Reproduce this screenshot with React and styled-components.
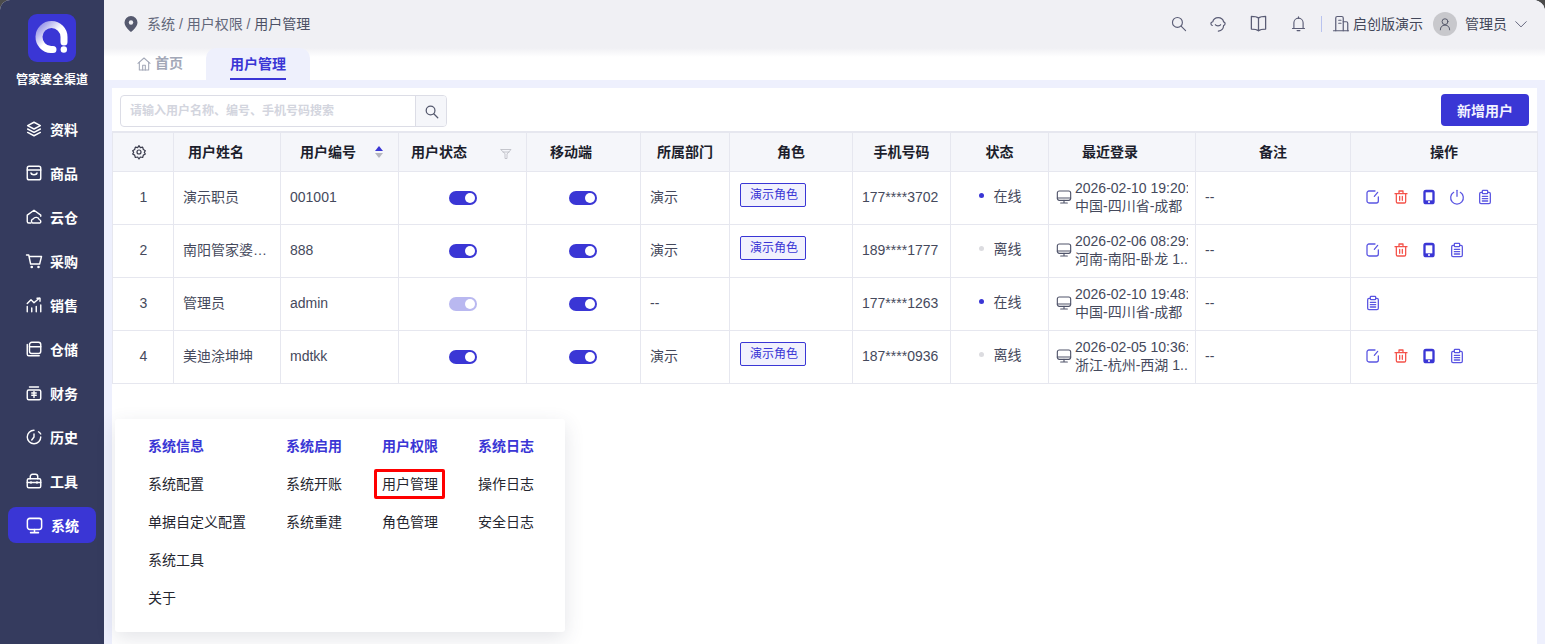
import React from "react";
import styled, { createGlobalStyle } from "styled-components";

const Blue = "#3a36d5";
const Global = createGlobalStyle`
  html, body { margin: 0; padding: 0; height: 100%; background: #4b4b4b; overflow: hidden; }
  #root { height: 644px; }
  * { box-sizing: border-box; }
  body { font-family: "Liberation Sans", "Noto Sans CJK SC", sans-serif; font-size: 14px; }
`;
const Shell = styled.div`
  width: 1545px; height: 644px; display: flex; position: relative; overflow: hidden;
  border-radius: 10px 12px 0 0; background: #eef0fd;
`;
const Side = styled.aside`
  width: 104px; flex: none; background: #353b5e; display: flex; flex-direction: column; align-items: center; padding-top: 14px;
`;
const Logo = styled.div`width: 48px; height: 48px; border-radius: 9px; background: ${Blue}; display: flex; align-items: center; justify-content: center;`;
const Brand = styled.div`margin: 10px 0 23px; color: #fff; font-size: 12px; font-weight: 700; line-height: 16px; white-space: nowrap;`;
const NavList = styled.nav`display: flex; flex-direction: column; width: 88px; gap: 8px;`;
const NavItem = styled.a`
  height: 36px; border-radius: 8px; display: flex; align-items: center; gap: 7px; padding-left: 17px;
  background: ${p => p.$active ? Blue : "transparent"}; color: #fff; font-weight: 700; font-size: 14px;
`;
const Main = styled.main`flex: 1; min-width: 0; display: flex; flex-direction: column; background: #eef0fd;`;
const Top = styled.header`height: 48px; flex: none; background: #f0f0f4; display: flex; align-items: center; padding: 0 17px 1px 20px;`;
const Crumb = styled.div`display: flex; align-items: center; gap: 9px; color: #62677a; font-size: 14px; flex: 1;`;
const CrumbText = styled.span`margin-top: -2px;`;
const CrumbLast = styled.span`color: #4c5064;`;
const TopTools = styled.div`display: flex; align-items: center; color: #5a5c75;`;
const ToolBtn = styled.span`width: 40px; display: flex; justify-content: center;`;
const Divider = styled.span`width: 1px; height: 16px; background: #b9c3ef; margin: 0 10px 0 3px;`;
const Org = styled.span`color: #43475a; margin: -2px 0 0 ${p => p.$gap ?? 0}px; white-space: nowrap;`;
const Avatar = styled.span`width: 24px; height: 24px; border-radius: 50%; background: #c8c8cc; margin: 0 8px 0 10px; display: flex; align-items: center; justify-content: center;`;
const Spacer = styled.span`width: 7px;`;
const TabBar = styled.div`height: 32px; flex: none; display: flex; padding-left: 8px; background: linear-gradient(#f0f0f4 0, #fff 9px); gap: 0;`;
const Tab = styled.div`
  height: 32px; display: flex; align-items: center; font-weight: 700; gap: 3px; padding: 0 24px;
  color: ${p => p.$active ? Blue : "#a3a8b8"}; background: ${p => p.$active ? "#eef0fc" : "transparent"};
  border-radius: 10px 10px 0 0; width: ${p => p.$active ? "104px" : "94px"};
`;
const TabText = styled.span`display: block; border-bottom: ${p => p.$active ? `2px solid ${Blue}` : "none"}; line-height: ${p => p.$active ? "28px" : "28px"}; margin: ${p => p.$active ? "2px 0 0" : "0 0 2px"}; white-space: nowrap;`;
const Content = styled.section`flex: 1; margin: 8px 8px 0; background: #fff; min-height: 0;`;
const Toolbar = styled.div`height: 43px; display: flex; align-items: flex-start; justify-content: space-between; padding: 6px 8px 0 8px;`;
const Search = styled.div`width: 327px; height: 32px; margin-top: 1px; display: flex; border: 1px solid #dcdde6; border-radius: 4px; overflow: hidden;`;
const SearchText = styled.div`flex: 1; color: #d3d5de; font-size: 12px; font-weight: 700; line-height: 30px; padding-left: 9px; white-space: nowrap;`;
const SearchBtn = styled.div`width: 31px; border-left: 1px solid #dcdde6; background: #f5f6fa; display: flex; align-items: center; justify-content: center; color: #55596e;`;
const AddBtn = styled.button`width: 88px; height: 32px; border: 0; border-radius: 4px; background: ${Blue}; color: #f2f2ff; font: 700 14px "Liberation Sans", "Noto Sans CJK SC", sans-serif;`;
const Table = styled.table`width: 1425px; table-layout: fixed; border-collapse: collapse;`;
const Th = styled.th`
  height: 39px; background: #f5f6fa; border: 1px solid #e6e7ef; border-top-width: 2px; color: #1c1e2c; font-size: 14px; font-weight: 700; line-height: 20px;
  text-align: ${p => p.$left !== undefined ? "left" : "center"}; padding: 0 0 0 ${p => p.$left ?? 0}px; position: relative;
`;
const GearCell = styled.span`display: flex; justify-content: center; color: #3a3c4c; padding-right: 9px;`;
const Td = styled.td`
  height: 53px; border: 1px solid #e6e7ef; color: #45495c; font-size: 14px; line-height: 20px;
  padding: 0 ${p => p.$pad ?? 9}px 2px ${p => p.$lp ?? p.$pad ?? 9}px;
  text-align: ${p => p.$center ? "center" : "left"}; white-space: nowrap; overflow: hidden; text-overflow: ellipsis;
`;
const HeadMark = styled.span`position: absolute; top: calc(50% + ${p => p.$dy ?? 0}px); transform: translateY(-50%); left: ${p => p.$x}px; display: flex;`;
const Toggle = styled.span`
  display: inline-flex; vertical-align: middle; width: 28px; height: 14px; border-radius: 7px; background: ${Blue}; opacity: ${p => p.$dim ? .35 : 1};
  align-items: center; justify-content: flex-end; padding-right: 2px;
`;
const Knob = styled.span`width: 10px; height: 10px; border-radius: 50%; background: #fff;`;
const Tag = styled.span`display: inline-block; height: 24px; line-height: 22px; padding: 0 7px 0 9px; margin-bottom: 4px; border: 1px solid ${Blue}; border-radius: 2px; background: #f1f1fd; color: ${Blue}; font-size: 12px;`;
const Status = styled.span`display: inline-flex; align-items: center; gap: 10px; margin-bottom: 2px; vertical-align: middle;`;
const Dot = styled.i`width: 5px; height: 5px; border-radius: 50%; background: ${p => p.$on ? Blue : "#dcdce0"}; `;
const Login = styled.div`display: flex; align-items: center; gap: 3px; color: #45495c;`;
const LoginText = styled.div`width: 113px; line-height: 18px; font-size: 14px;`;
const LoginLine = styled.div`white-space: nowrap; overflow: hidden;`;
const Actions = styled.div`display: flex; gap: 12px; align-items: center;`;
const Pop = styled.div`
  position: absolute; left: 115px; top: 419px; width: 450px; height: 213px; background: #fff; border-radius: 3px;
  box-shadow: 0 6px 20px rgba(60,62,90,.14); padding: 8px 0 0 33px; display: grid; grid-template-columns: 138px 96px 96px 1fr; align-content: start;
`;
const PopCol = styled.div`display: flex; flex-direction: column;`;
const PopHead = styled.div`height: 38px; line-height: 38px; color: ${Blue}; font-weight: 700; font-size: 14px; white-space: nowrap;`;
const PopItem = styled.div`height: 38px; line-height: 38px; color: #25262f; font-size: 14px; white-space: nowrap;`;
const Mark = styled.span`position: relative; display: inline-block; &::after { content: ""; position: absolute; left: -8px; right: -7px; top: 4px; bottom: 4px; border: 3px solid #f00; border-radius: 2px; }`;

const S = ({ s = 18, sw = 1.6, c = "currentColor", children, vb = 24, fill = "none" }) => (
  <svg width={s} height={s} viewBox={`0 0 ${vb} ${vb}`} fill={fill} stroke={c} strokeWidth={sw} strokeLinecap="round" strokeLinejoin="round" style={{ flex: "none", display: "block" }}>{children}</svg>
);

const nav = [
  ["资料", <><path d="M12 3 3.500 7.500 12 12l8.500-4.500z" /><path d="M3.500 12 12 16.500 20.500 12" /><path d="M3.500 16.500 12 21l8.500-4.500" /></>],
  ["商品", <><rect x="3" y="3" width="18" height="18" rx="2.500" /><path d="M3 8h18" /><path d="M8 12c.6 3 7.400 3 8 0" /></>],
  ["云仓", <><path d="M8 20H5a2 2 0 0 1-2-2V9.500L12 3l9 6.500V11" /><path d="M10 20a3 3 0 0 1 1-5.500 4.500 4.500 0 0 1 8 1 2.500 2.500 0 0 1 1 4.500z" /></>],
  ["采购", <><path d="M2 4h3l1 5m0 0 1.500 7h12L22 6H5.500z" /><circle cx="9" cy="20" r=".8" /><circle cx="18" cy="20" r=".8" /></>],
  ["销售", <><path d="M3 21v-7M9 21v-5M15 21v-7M21 21V12" /><path d="m3 10 5-5 4 4 7-6" /><path d="M16 3h4v4" /></>],
  ["仓储", <><path d="M3 6v13a2 2 0 0 0 2 2h14" /><rect x="6" y="3" width="15" height="15" rx="3" /><path d="M6 9h15" /></>],
  ["财务", <><rect x="3" y="8" width="18" height="13" rx="2" /><path d="M6 4h12" /><path d="M9 12h6M12 10v8M9 15h6" /></>],
  ["历史", <><path d="M12 3a9 9 0 1 0 9 9" /><path d="M21 8a9 9 0 0 0-3-3" /><path d="M12 8v4l-3 4" /></>],
  ["工具", <><rect x="3" y="9" width="18" height="12" rx="2" /><path d="M7 9V6a3 3 0 0 1 3-3h4a3 3 0 0 1 3 3v3" /><path d="M3 14h18M8 13v2M16 13v2" /></>],
  ["系统", <><rect x="3" y="3" width="18" height="14" rx="3" /><path d="M12 17v4M7 21h10" /></>],
];

const Edit = () => <S s={16} c="#5a55e2" sw={1.9}><path d="M20 12v6a3 3 0 0 1-3 3H6a3 3 0 0 1-3-3V6a3 3 0 0 1 3-3h9" /><path d="m14 11 5-6" /></S>;
const Del = () => <S s={16} c="#f4524a" sw={1.9}><path d="M3 7h18M9 7V3h6v4" /><path d="M5 7v12a2 2 0 0 0 2 2h10a2 2 0 0 0 2-2V7" /><path d="M10 11v6M14 11v6" /></S>;
const Phone = () => <S s={16} c={Blue} sw={2}><rect x="4.500" y="2" width="15" height="20" rx="3" fill={Blue} /><rect x="7" y="5" width="10" height="12" fill="#fff" stroke="none" /><circle cx="12" cy="19.500" r=".6" fill="#fff" stroke="#fff" /></S>;
const Power = () => <S s={16} c="#5a55e2" sw={1.9}><path d="M12 2v9" /><path d="M7 5a9.500 9.500 0 1 0 10 0" /></S>;
const Clip = () => <S s={16} c="#5a55e2" sw={1.9}><path d="M8 5H6a2 2 0 0 0-2 2v13a2 2 0 0 0 2 2h12a2 2 0 0 0 2-2V7a2 2 0 0 0-2-2h-2" /><rect x="8" y="2" width="8" height="5" rx="1" /><path d="M8 11h8M8 14.500h8M8 18h8" /></S>;
const Monitor = () => <S s={16} c="#50546a" sw={1.7}><rect x="2" y="3" width="20" height="14" rx="3" /><path d="M2 13.500h20M12 17v3M7 21h10" /></S>;

const Row = ({ n, name, code, dim, dept, tag, phone, on, t, place, acts }) => (
  <tr>
    <Td $center $lp={10}>{n}</Td>
    <Td $pad={8} $lp={9}>{name}</Td>
    <Td>{code}</Td>
    <Td $center $lp={10}><Toggle $dim={dim}><Knob /></Toggle></Td>
    <Td $center $lp={8}><Toggle><Knob /></Toggle></Td>
    <Td>{dept}</Td>
    <Td $pad={10}>{tag && <Tag>演示角色</Tag>}</Td>
    <Td>{phone}</Td>
    <Td $center $lp={10}><Status><Dot $on={on} />{on ? "在线" : "离线"}</Status></Td>
    <Td $pad={7}><Login><Monitor /><LoginText><LoginLine>{t}</LoginLine><LoginLine>{place}</LoginLine></LoginText></Login></Td>
    <Td>--</Td>
    <Td $pad={14}><Actions>{acts}</Actions></Td>
  </tr>
);

export default function App() {
  const widths = [61, 107, 118, 128, 114, 89, 123, 98, 98, 147, 155, 187];
  return (
    <Shell>
      <Global />
      <Side>
        <Logo>
          <svg width="36" height="36" viewBox="0 0 36 36">
            <defs><linearGradient id="rg" x1="0" y1="0" x2="1" y2="1"><stop offset="0" stopColor="#8f8ce6" /><stop offset=".5" stopColor="#fff" /></linearGradient></defs>
            <path d="M19 29.500H17A12.500 12.500 0 1 1 30 17v5" fill="none" stroke="url(#rg)" strokeWidth="7" strokeLinecap="round" />
            <circle cx="29.800" cy="29.500" r="3.200" fill="#fff" />
          </svg>
        </Logo>
        <Brand>管家婆全渠道</Brand>
        <NavList>
          {nav.map(([label, icon], i) => (
            <NavItem key={label} $active={i === 9}><S s={i === 9 ? 19 : 18} sw={1.9}>{icon}</S>{label}</NavItem>
          ))}
        </NavList>
      </Side>
      <Main>
        <Top>
          <Crumb>
            <svg width="14" height="16" viewBox="0 0 14 16"><path d="M7 0a6.500 6.500 0 0 1 6.500 6.500C13.500 11 7 16 7 16S.5 11 .5 6.500A6.500 6.500 0 0 1 7 0z" fill="#55596e" /><circle cx="7" cy="6.500" r="2.200" fill="#f0f0f4" /></svg>
            <CrumbText>系统 / 用户权限 / <CrumbLast>用户管理</CrumbLast></CrumbText>
          </Crumb>
          <TopTools>
            <ToolBtn><S s={17}><circle cx="10.500" cy="10.500" r="7" /><path d="m16 16 6 6" /></S></ToolBtn>
            <ToolBtn><S s={18}><path d="M5 9a7.500 7.500 0 0 1 14.500 0" /><path d="M4 9.500c-2 .5-2 4 .5 4.500" /><path d="M20 9.500c2 .5 2 4-.5 4.500" /><path d="M19.500 14a8 8 0 0 1-7 7.500" /><path d="M8.500 13c1 2 6 2 7 0" /></S></ToolBtn>
            <ToolBtn><S s={19}><path d="M12 5C10 3.500 7 3 3 3v16c4 0 7 .5 9 2 2-1.500 5-2 9-2V3c-4 0-7 .5-9 2z" /><path d="M12 5v16" /></S></ToolBtn>
            <ToolBtn><S s={17}><path d="M5.500 19v-8a6.500 6.500 0 0 1 13 0v8" /><path d="M3.500 19h17M10 22h4M12 4.500V2.500" /></S></ToolBtn>
            <Divider />
            <S s={18}><path d="M2 21h20" /><path d="M5 21V4a2 2 0 0 1 2-2h6a2 2 0 0 1 2 2v17" /><path d="M15 9h4a2 2 0 0 1 2 2v10" /><path d="M9 7h3M9 11h3" /></S>
            <Org $gap={3}>启创版演示</Org>
            <Avatar><S s={14} c="#4f5264"><circle cx="12" cy="8" r="5" /><path d="M4 22c0-5 3-8 8-8s8 3 8 8" /></S></Avatar>
            <Org>管理员</Org>
            <Spacer />
            <S s={14}><path d="m3 8 9 9 9-9" /></S>
          </TopTools>
        </Top>
        <TabBar>
          <Tab>
            <S s={16} sw={1.6}><path d="M3 11 12 3l9 8" /><path d="M5 9v12h14V9" /><path d="M10 21v-7h4v7" /></S>
            <TabText>首页</TabText>
          </Tab>
          <Tab $active><TabText $active>用户管理</TabText></Tab>
        </TabBar>
        <Content>
          <Toolbar>
            <Search>
              <SearchText>请输入用户名称、编号、手机号码搜索</SearchText>
              <SearchBtn><S s={15} sw={2}><circle cx="10.500" cy="10.500" r="7" /><path d="m16 16 6 6" /></S></SearchBtn>
            </Search>
            <AddBtn>新增用户</AddBtn>
          </Toolbar>
          <Table>
            <colgroup>{widths.map((w, i) => <col key={i} style={{ width: w }} />)}</colgroup>
            <thead>
              <tr>
                <Th><GearCell><S s={16} sw={1.8}><circle cx="12" cy="12" r="3" /><path d="M12 2.500l2 3 3.500-.7 1 3.500 3 1.700-1.500 2.500 1.500 2.500-3 1.700-1 3.500-3.500-.7-2 3-2-3-3.500.7-1-3.500-3-1.700 1.500-2.500L2.500 10l3-1.700 1-3.500 3.500.7z" /></S></GearCell></Th>
                <Th $left={14}>用户姓名</Th>
                <Th $left={19}>用户编号<HeadMark $x={93}><svg width="10" height="14" viewBox="0 0 10 14"><path d="M5 1l4 5H1z" fill={Blue} /><path d="M5 13l4-5H1z" fill="#b5b6c0" /></svg></HeadMark></Th>
                <Th $left={12}>用户状态<HeadMark $x={101} $dy={2}><S s={12} c="#b4b5bd" sw={1.5}><path d="M2 3h20l-8 9v9h-4v-9z" /><path d="M6 8h12" /></S></HeadMark></Th>
                <Th $left={23}>移动端</Th><Th>所属部门</Th><Th>角色</Th><Th>手机号码</Th><Th>状态</Th>
                <Th $left={33}>最近登录</Th><Th>备注</Th><Th>操作</Th>
              </tr>
            </thead>
            <tbody>
              <Row n={1} name="演示职员" code="001001" dept="演示" tag phone="177****3702" on t="2026-02-10 19:20:33" place="中国-四川省-成都" acts={<><Edit /><Del /><Phone /><Power /><Clip /></>} />
              <Row n={2} name="南阳管家婆演示账号" code="888" dept="演示" tag phone="189****1777" t="2026-02-06 08:29:12" place="河南-南阳-卧龙 1.." acts={<><Edit /><Del /><Phone /><Clip /></>} />
              <Row n={3} name="管理员" code="admin" dim dept="--" phone="177****1263" on t="2026-02-10 19:48:05" place="中国-四川省-成都" acts={<Clip />} />
              <Row n={4} name="美迪涂坤坤" code="mdtkk" dept="演示" tag phone="187****0936" t="2026-02-05 10:36:47" place="浙江-杭州-西湖 1.." acts={<><Edit /><Del /><Phone /><Clip /></>} />
            </tbody>
          </Table>
        </Content>
      </Main>
      <Pop>
        <PopCol><PopHead>系统信息</PopHead><PopItem>系统配置</PopItem><PopItem>单据自定义配置</PopItem><PopItem>系统工具</PopItem><PopItem>关于</PopItem></PopCol>
        <PopCol><PopHead>系统启用</PopHead><PopItem>系统开账</PopItem><PopItem>系统重建</PopItem></PopCol>
        <PopCol><PopHead>用户权限</PopHead><PopItem><Mark>用户管理</Mark></PopItem><PopItem>角色管理</PopItem></PopCol>
        <PopCol><PopHead>系统日志</PopHead><PopItem>操作日志</PopItem><PopItem>安全日志</PopItem></PopCol>
      </Pop>
    </Shell>
  );
}
